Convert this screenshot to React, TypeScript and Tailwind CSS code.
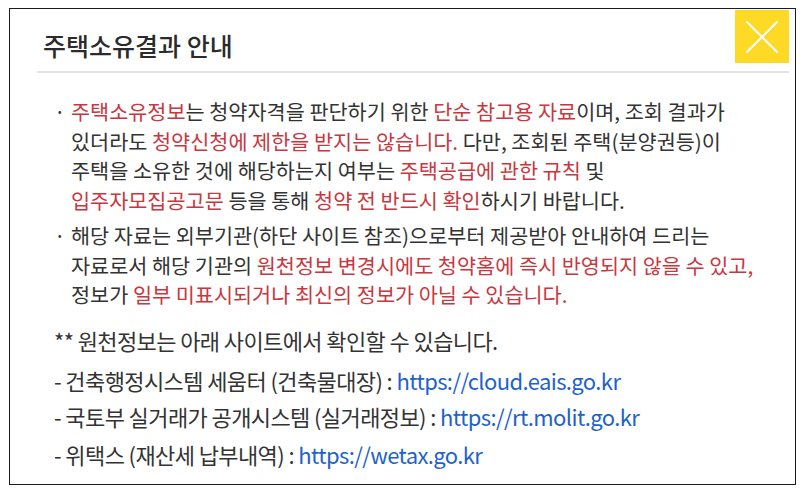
import React from "react";

const R = ({ children }: { children: React.ReactNode }) => (
  <span className="text-[#c9373f]">{children}</span>
);

const A = ({ children }: { children: React.ReactNode }) => (
  <span className="text-[#1e62c9]">{children}</span>
);

export default function App() {
  return (
    <div
      className="w-[804px] h-[495px] bg-white pt-[8px] pl-[9px]"
      style={{ fontFamily: '"Noto Sans CJK KR", "Noto Sans", sans-serif' }}
    >
      <div className="w-[787px] h-[477px] border border-[#1c1c1c] pr-[6px] pl-[27px] pt-[1px]">
        {/* Header */}
        <div className="flex items-start justify-between border-b-2 border-[#e3e3e3] h-[63px]">
          <h1 className="pl-[6px] pt-[19px] text-[25px] font-medium text-[#2b2b2b] leading-[32px]">
            주택소유결과 안내
          </h1>
          <button className="w-[54px] h-[53px] bg-[#fed926] flex items-center justify-center">
            <svg width="34" height="34" viewBox="0 0 34 34">
              <path d="M2 2 L32 32 M32 2 L2 32" stroke="#fff" strokeWidth="2" strokeLinecap="round" />
            </svg>
          </button>
        </div>

        {/* Body */}
        <div className="pl-[17px] pt-[24px] text-[20.75px] text-[#333] whitespace-nowrap">
          <div className="flex leading-[29.5px]">
            <span className="w-[17px]">·</span>
            <p>
              <R>주택소유정보</R>는 청약자격을 판단하기 위한 <R>단순 참고용 자료</R>이며, 조회 결과가
              <br />
              있더라도 <R>청약신청에 제한을 받지는 않습니다.</R> 다만, 조회된 주택(분양권등)이
              <br />
              주택을 소유한 것에 해당하는지 여부는 <R>주택공급에 관한 규칙</R> 및
              <br />
              <R>입주자모집공고문</R> 등을 통해 <R>청약 전 반드시 확인</R>하시기 바랍니다.
            </p>
          </div>
          <div className="flex leading-[29.5px] mt-[6px]">
            <span className="w-[17px]">·</span>
            <p>
              해당 자료는 외부기관(하단 사이트 참조)으로부터 제공받아 안내하여 드리는
              <br />
              자료로서 해당 기관의 <R>원천정보 변경시에도 청약홈에 즉시 반영되지 않을 수 있고,</R>
              <br />
              정보가 <R>일부 미표시되거나 최신의 정보가 아닐 수 있습니다.</R>
            </p>
          </div>

          <div className="mt-[15px] text-[22px] leading-[30px] tracking-[-0.6px]">
            <p>** 원천정보는 아래 사이트에서 확인할 수 있습니다.</p>
            <p className="mt-[10px]">
              - 건축행정시스템 세움터 (건축물대장) : <A>https://cloud.eais.go.kr</A>
            </p>
            <p className="mt-[6px]">
              - 국토부 실거래가 공개시스템 (실거래정보) : <A>https://rt.molit.go.kr</A>
            </p>
            <p className="mt-[8px]">
              - 위택스 (재산세 납부내역) : <A>https://wetax.go.kr</A>
            </p>
          </div>
        </div>
      </div>
    </div>
  );
}
